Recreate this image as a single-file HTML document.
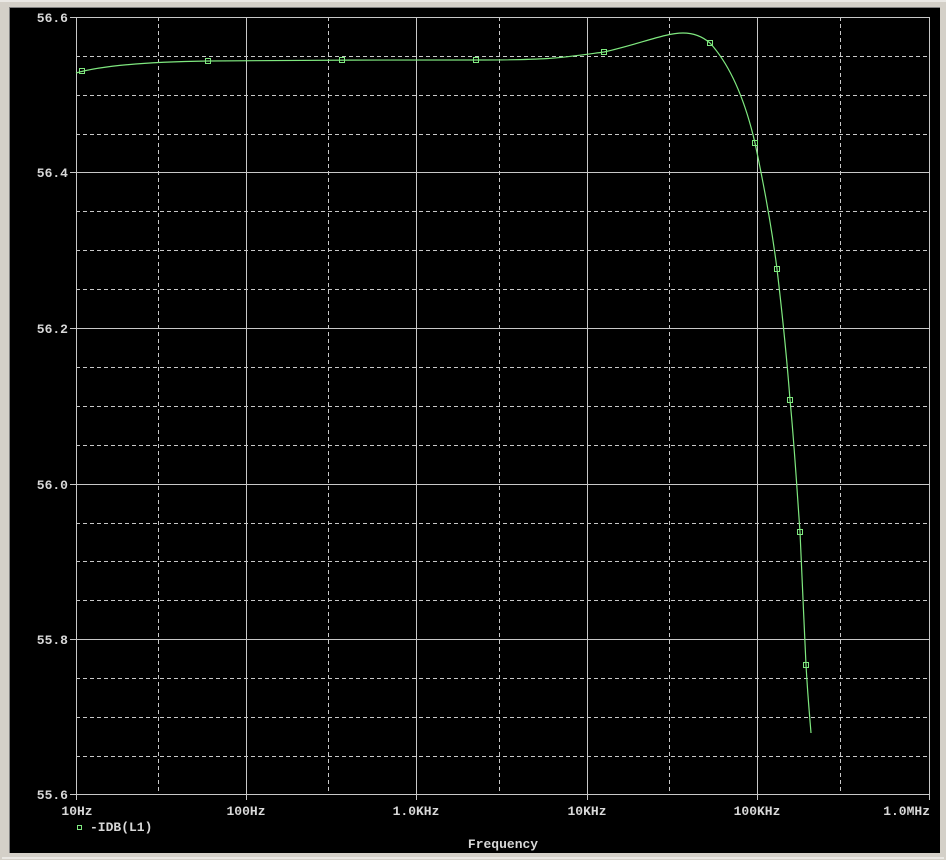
<!DOCTYPE html>
<html><head><style>
html,body{margin:0;padding:0;background:#d4d0c8;width:946px;height:860px;overflow:hidden}
svg{display:block}
text{font-family:"Liberation Mono","DejaVu Sans Mono",monospace;font-size:13px;font-weight:bold;fill:#d8d8d8}
</style></head><body>
<svg width="946" height="860" xmlns="http://www.w3.org/2000/svg">
<rect x="0" y="0" width="946" height="860" fill="#d4d0c8"/>
<line x1="0" y1="1" x2="946" y2="1" fill="none" stroke="#ffffff"/>
<line x1="2" y1="858" x2="944" y2="858" stroke="#ffffff"/>
<rect x="9" y="7" width="931" height="846" fill="#000"/>
<line x1="9" y1="7.5" x2="940" y2="7.5" stroke="#808080"/>
<line x1="9.5" y1="7" x2="9.5" y2="853" stroke="#808080"/>
<g stroke="#c8c8c8" stroke-width="1" stroke-dasharray="4,3" fill="none">
<path d="M158.5 17V795M328.5 17V795M499.5 17V795M669.5 17V795M840.5 17V795"/>
<path d="M76 56.5H930M76 134.5H930M76 211.5H930M76 250.5H930M76 289.5H930M76 367.5H930M76 406.5H930M76 445.5H930M76 523.5H930M76 561.5H930M76 600.5H930M76 678.5H930M76 717.5H930M76 756.5H930M76 95.5H930"/>
</g>
<g stroke="#c8c8c8" stroke-width="1" fill="none">
<rect x="76.5" y="17.5" width="853" height="777"/>
<path d="M246.5 17V795M416.5 17V795M587.5 17V795M757.5 17V795"/>
<path d="M76 172.5H930M76 328.5H930M76 484.5H930M76 639.5H930"/>
<path d="M70 17.5H76M70 172.5H76M70 328.5H76M70 484.5H76M70 639.5H76M70 794.5H76M76.5 795V800M246.5 795V800M416.5 795V800M587.5 795V800M757.5 795V800M929.5 795V800"/>
</g>
<path fill="none" stroke="#7fe87f" stroke-width="1.2" d="M76 73 C100 66,140 62,208 61 S400 60,476 60 S560 58,604 52 C640 44,665 33,683 33 C695 33,703 37,710 43 C730 65,745 100,755 143 C765 190,772 230,777 269 C783 320,787 360,790 400 C794 440,797 490,800 532 C802 580,804 620,806 665 C808 700,810 720,811 733"/>
<g fill="none" stroke="#7fe87f" stroke-width="1">
<rect x="79.5" y="68.5" width="5" height="5"/><rect x="205.5" y="58.5" width="5" height="5"/>
<rect x="339.5" y="57.5" width="5" height="5"/><rect x="473.5" y="57.5" width="5" height="5"/>
<rect x="601.5" y="49.5" width="5" height="5"/><rect x="707.5" y="40.5" width="5" height="5"/>
<rect x="752.5" y="140.5" width="5" height="5"/><rect x="774.5" y="266.5" width="5" height="5"/>
<rect x="787.5" y="397.5" width="5" height="5"/><rect x="797.5" y="529.5" width="5" height="5"/>
<rect x="803.5" y="662.5" width="5" height="5"/>
<rect x="77.5" y="825.5" width="4" height="4"/>
</g>
<g text-anchor="end">
<text x="68" y="22">56.6</text><text x="68" y="177">56.4</text><text x="68" y="333">56.2</text>
<text x="68" y="489">56.0</text><text x="68" y="644">55.8</text><text x="68" y="799">55.6</text>
</g>
<g text-anchor="middle">
<text x="77" y="815">10Hz</text><text x="246" y="815">100Hz</text><text x="416" y="815">1.0KHz</text>
<text x="587" y="815">10KHz</text><text x="757" y="815">100KHz</text>
</g>
<text x="930" y="815" text-anchor="end">1.0MHz</text>
<text x="90" y="831">-IDB(L1)</text>
<text x="503" y="848" text-anchor="middle">Frequency</text>
</svg>
</body></html>
